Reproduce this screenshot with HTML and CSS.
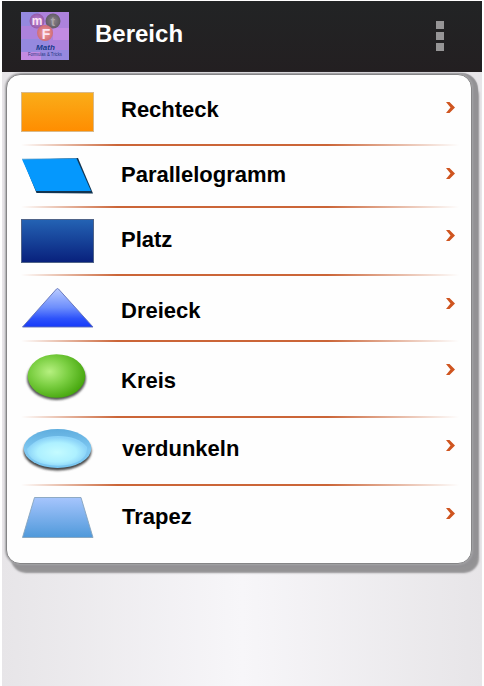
FILE: index.html
```
<!DOCTYPE html>
<html lang="de">
<head>
  <meta charset="UTF-8">
  <title>Bereich</title>
  <link rel="stylesheet" href="styles.css">
</head>
<body>
  <div id="app">
    <header>
      <svg class="logo" width="48" height="48" viewBox="0 0 48 48">
        <defs>
          <radialGradient id="g-m"><stop offset="0" stop-color="#c08add"/><stop offset="1" stop-color="#955aa8"/></radialGradient>
          <radialGradient id="g-t"><stop offset="0" stop-color="#8d858b"/><stop offset="1" stop-color="#615b66"/></radialGradient>
          <radialGradient id="g-f"><stop offset="0" stop-color="#f0a09c"/><stop offset="1" stop-color="#cf6c78"/></radialGradient>
        </defs>
        <rect width="48" height="48" fill="#ad82dc"/>
        <path d="M0 0h18v14H0zM0 27h28v13H0zM20 38h28v10H20z" fill="#9589df"/>
        <path d="M32 16h16v12H32zM0 40h20v8H0z" fill="#c38be2"/>
        <circle cx="16" cy="9" r="7.5" fill="url(#g-m)"/>
        <circle cx="32" cy="9" r="7.5" fill="url(#g-t)"/>
        <circle cx="24" cy="21" r="8" fill="url(#g-f)"/>
        <text class="ball" x="16" y="13" font-size="12">m</text>
        <text class="ball dim" x="32" y="14" font-size="13">t</text>
        <text class="ball" x="25" y="27" font-size="14">F</text>
        <text class="name" x="24.500" y="38" font-size="8" textLength="19">Math</text>
        <text class="tag" x="24" y="44" font-size="5" textLength="34" lengthAdjust="spacingAndGlyphs">Formulas &amp; Tricks</text>
      </svg>
      <h1>Bereich</h1>
      <div class="menu"><i></i><i></i><i></i></div>
    </header>

    <ul class="card">
      <li class="rechteck">
        <svg class="icon" width="74" height="40" viewBox="0 0 74 40">
          <defs><linearGradient id="g-orange" x2="0" y2="1"><stop offset="0" stop-color="#faad19"/><stop offset="1" stop-color="#ff8d00"/></linearGradient></defs>
          <rect x=".5" y=".5" width="72" height="39" fill="url(#g-orange)" stroke="#d9b98a"/>
        </svg>
        <span class="label">Rechteck</span>
        <svg class="arrow" width="9" height="11" viewBox="0 0 9 11"><path d="M0 0h3.500L9 5.500 3.500 11H0l4.500-5.500z"/></svg>
      </li>
      <li class="parallelogramm">
        <svg class="icon" width="74" height="37" viewBox="0 0 74 37">
          <path d="M2 2L57 0 72 35.500 15.500 35z" fill="#123552"/>
          <path d="M1 1.200L55.500.5 70 33H15z" fill="#0598fd"/>
          <path d="M1 1.200L55.500.5" stroke="#4a94c4" stroke-width=".7"/>
        </svg>
        <span class="label">Parallelogramm</span>
        <svg class="arrow" width="9" height="11" viewBox="0 0 9 11"><path d="M0 0h3.500L9 5.500 3.500 11H0l4.500-5.500z"/></svg>
      </li>
      <li class="platz">
        <svg class="icon" width="74" height="44" viewBox="0 0 74 44">
          <defs><linearGradient id="g-navy" x2="0" y2="1"><stop offset="0" stop-color="#2463b4"/><stop offset="1" stop-color="#08207c"/></linearGradient></defs>
          <rect x=".5" y=".5" width="72" height="43" fill="url(#g-navy)" stroke="#4f6388"/>
        </svg>
        <span class="label">Platz</span>
        <svg class="arrow" width="9" height="11" viewBox="0 0 9 11"><path d="M0 0h3.500L9 5.500 3.500 11H0l4.500-5.500z"/></svg>
      </li>
      <li class="dreieck">
        <svg class="icon" width="74" height="40" viewBox="0 0 74 40">
          <defs><linearGradient id="g-blue" x2="0" y2="1"><stop offset="0" stop-color="#b9cbff"/><stop offset=".5" stop-color="#6c8dfc"/><stop offset=".78" stop-color="#2d52fa"/><stop offset="1" stop-color="#1539fa"/></linearGradient></defs>
          <path d="M35.500 1Q36.500 0 37.500 1L72 39H1.500z" fill="url(#g-blue)" stroke="#6070b8" stroke-width=".9"/>
        </svg>
        <span class="label">Dreieck</span>
        <svg class="arrow" width="9" height="11" viewBox="0 0 9 11"><path d="M0 0h3.500L9 5.500 3.500 11H0l4.500-5.500z"/></svg>
      </li>
      <li class="kreis">
        <svg class="icon" width="74" height="50" viewBox="0 0 74 50">
          <defs>
            <radialGradient id="g-green" cx=".38" cy=".4" r=".65"><stop offset="0" stop-color="#b6f080"/><stop offset=".5" stop-color="#7bcf42"/><stop offset="1" stop-color="#45a60d"/></radialGradient>
            <filter id="soft" x="-10%" y="-10%" width="120%" height="130%"><feGaussianBlur stdDeviation="1.3"/></filter>
          </defs>
          <ellipse cx="35.500" cy="24.500" rx="29.500" ry="21.500" fill="#555" filter="url(#soft)"/>
          <ellipse cx="35.500" cy="22" rx="28.800" ry="21.800" fill="url(#g-green)"/>
        </svg>
        <span class="label">Kreis</span>
        <svg class="arrow" width="9" height="11" viewBox="0 0 9 11"><path d="M0 0h3.500L9 5.500 3.500 11H0l4.500-5.500z"/></svg>
      </li>
      <li class="ellipse">
        <svg class="icon" width="74" height="45" viewBox="0 0 74 45">
          <defs>
            <linearGradient id="g-sky" x2="0" y2="1"><stop offset="0" stop-color="#5fadde"/><stop offset=".55" stop-color="#80c9f2"/><stop offset="1" stop-color="#78c6f0"/></linearGradient>
            <radialGradient id="g-glow" cy=".55"><stop offset="0" stop-color="#c4fbff"/><stop offset=".65" stop-color="#adf0ff"/><stop offset="1" stop-color="#8bd3f8"/></radialGradient>
          </defs>
          <ellipse cx="36.500" cy="22" rx="34" ry="19.500" fill="#444" filter="url(#soft)"/>
          <ellipse cx="36.500" cy="19.500" rx="33.800" ry="19.500" fill="url(#g-sky)"/>
          <path d="M6 20Q17 7 37 7T66 18Q67 31 49 35.500 36 38 23 35 7 31 6 20z" fill="url(#g-glow)"/>
        </svg>
        <span class="label">verdunkeln</span>
        <svg class="arrow" width="9" height="11" viewBox="0 0 9 11"><path d="M0 0h3.500L9 5.500 3.500 11H0l4.500-5.500z"/></svg>
      </li>
      <li class="trapez">
        <svg class="icon" width="74" height="42" viewBox="0 0 74 42">
          <defs><linearGradient id="g-pale" x2="0" y2="1"><stop offset="0" stop-color="#a6c5fd"/><stop offset="1" stop-color="#4f99da"/></linearGradient></defs>
          <path d="M13.500.5H60L72 40.500H1.500z" fill="url(#g-pale)" stroke="#86a4bd" stroke-width=".9"/>
        </svg>
        <span class="label">Trapez</span>
        <svg class="arrow" width="9" height="11" viewBox="0 0 9 11"><path d="M0 0h3.500L9 5.500 3.500 11H0l4.500-5.500z"/></svg>
      </li>
    </ul>
  </div>
</body>
</html>
```
FILE: styles.css
```
* {
  box-sizing: border-box;
}
body {
  margin: 0;
  padding: 1px 2px 0;
  background: #fff;
  color: #000;
  font-family: "Liberation Sans", Arial, sans-serif;
}
#app {
  height: 685px;
  overflow: hidden;
  background: linear-gradient(to right, #e7e5e8, #f7f6f9 50%, #e7e5e8);
}

header {
  display: flex;
  align-items: flex-start;
  height: 71px;
  padding: 11px 38px 0 19px;
  background: linear-gradient(#222425, #231f21);
}
.logo {
  flex: none;
}
.logo text {
  text-anchor: middle;
}
.logo .ball {
  fill: #fce4f4;
  font-weight: bold;
}
.logo .dim {
  fill: #aaa4aa;
}
.logo .name {
  fill: #173c8c;
  font-style: italic;
  font-weight: bold;
}
.logo .tag {
  fill: #27377f;
}
h1 {
  margin: 8px 0 0 26px;
  color: #fff;
  font-size: 24px;
  line-height: 28px;
}
.menu {
  display: flex;
  flex-direction: column;
  gap: 3px;
  margin: 9px 0 0 auto;
}
.menu i {
  width: 8px;
  height: 8px;
  background: #969596;
}

.card {
  width: 466px;
  height: 490px;
  margin: 2px 0 0 4px;
  padding: 0 12px 0 14px;
  list-style: none;
  background: #fefefe;
  border: 1px solid #858587;
  border-radius: 14px;
  box-shadow: 0 0 2px 1px #a5a4a7, 4px 1px 1px 2px #929194, 6px 8px 2px 1px #949395;
}
.card li {
  display: flex;
  align-items: flex-start;
  background: linear-gradient(to right, transparent, #cb6538 22%, #cb6538 70%, transparent) bottom / 100% 2px no-repeat;
}
.label {
  margin-left: 26px;
  font-size: 22px;
  font-weight: bold;
  line-height: 26px;
}
.icon {
  flex: none;
}
.arrow {
  margin: 22px 4px 0 auto;
  fill: #cf5520;
}

/* rows differ in height, so each one places its own icon and label */
.rechteck { height: 71px; }
.rechteck .icon { margin-top: 17px; }
.rechteck .label { margin-top: 22px; }
.rechteck .arrow { margin-top: 27px; }

.parallelogramm { height: 62px; }
.parallelogramm .icon { margin-top: 12px; }
.parallelogramm .label { margin-top: 16px; }

.platz { height: 68px; }
.platz .icon { margin-top: 11px; }
.platz .label { margin-top: 19px; }

.dreieck { height: 66px; }
.dreieck .icon { margin-top: 12px; }
.dreieck .label { margin-top: 22px; }

.kreis { height: 76px; }
.kreis .icon { margin-top: 12px; }
.kreis .label { margin-top: 26px; }

.ellipse { height: 68px; }
.ellipse .icon { margin-top: 11px; }
.ellipse .label { margin-top: 18px; }

.card .trapez { background: none; }
.trapez .icon { margin-top: 11px; }
.trapez .label { margin-top: 18px; }
.ellipse .label,
.trapez .label { margin-left: 27px; }
```
